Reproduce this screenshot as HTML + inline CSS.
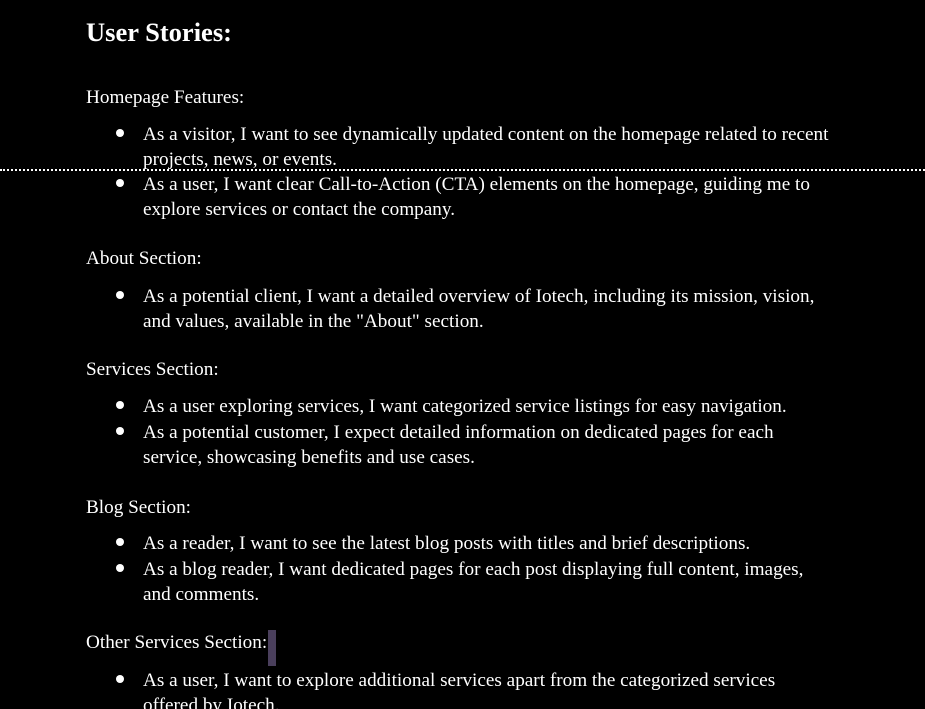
<!DOCTYPE html>
<html><head><meta charset="utf-8"><style>
html,body{margin:0;padding:0;background:#000;width:925px;height:709px;overflow:hidden;position:relative}
body{font-family:"Liberation Serif",serif;color:#fff;font-size:19.2px}
.l{position:absolute;white-space:nowrap;line-height:25px;height:25px;transform:translateY(1px)}
.t{left:143px}
.b{position:absolute;left:116px;width:8px;height:8px;border-radius:50%;background:#fff}
.p{left:86px}
h1{position:absolute;left:86px;top:16px;margin:0;font-size:26.5px;font-weight:bold;line-height:32px}
.dash{position:absolute;left:0;top:169px;width:925px;height:0;border-top:2px dotted #fff}
.cur{position:absolute;left:268px;top:630px;width:8px;height:36px;background:#4a3f5c}
</style></head><body>
<h1>User Stories:</h1>
<div class="l p" style="top:84px">Homepage Features:</div>
<div class="b" style="top:129px"></div>
<div class="l t" style="top:121px">As a visitor, I want to see dynamically updated content on the homepage related to recent</div>
<div class="l t" style="top:146px">projects, news, or events.</div>
<div class="dash"></div>
<div class="b" style="top:179px"></div>
<div class="l t" style="top:171px">As a user, I want clear Call-to-Action (CTA) elements on the homepage, guiding me to</div>
<div class="l t" style="top:196px">explore services or contact the company.</div>
<div class="l p" style="top:245px">About Section:</div>
<div class="b" style="top:291px"></div>
<div class="l t" style="top:283px">As a potential client, I want a detailed overview of Iotech, including its mission, vision,</div>
<div class="l t" style="top:308px">and values, available in the "About" section.</div>
<div class="l p" style="top:356px">Services Section:</div>
<div class="b" style="top:401px"></div>
<div class="l t" style="top:393px">As a user exploring services, I want categorized service listings for easy navigation.</div>
<div class="b" style="top:427px"></div>
<div class="l t" style="top:419px">As a potential customer, I expect detailed information on dedicated pages for each</div>
<div class="l t" style="top:444px">service, showcasing benefits and use cases.</div>
<div class="l p" style="top:494px">Blog Section:</div>
<div class="b" style="top:538px"></div>
<div class="l t" style="top:530px">As a reader, I want to see the latest blog posts with titles and brief descriptions.</div>
<div class="b" style="top:564px"></div>
<div class="l t" style="top:556px">As a blog reader, I want dedicated pages for each post displaying full content, images,</div>
<div class="l t" style="top:581px">and comments.</div>
<div class="l p" style="top:629px">Other Services Section:</div>
<div class="cur"></div>
<div class="b" style="top:675px"></div>
<div class="l t" style="top:667px">As a user, I want to explore additional services apart from the categorized services</div>
<div class="l t" style="top:692px">offered by Iotech.</div>
</body></html>
